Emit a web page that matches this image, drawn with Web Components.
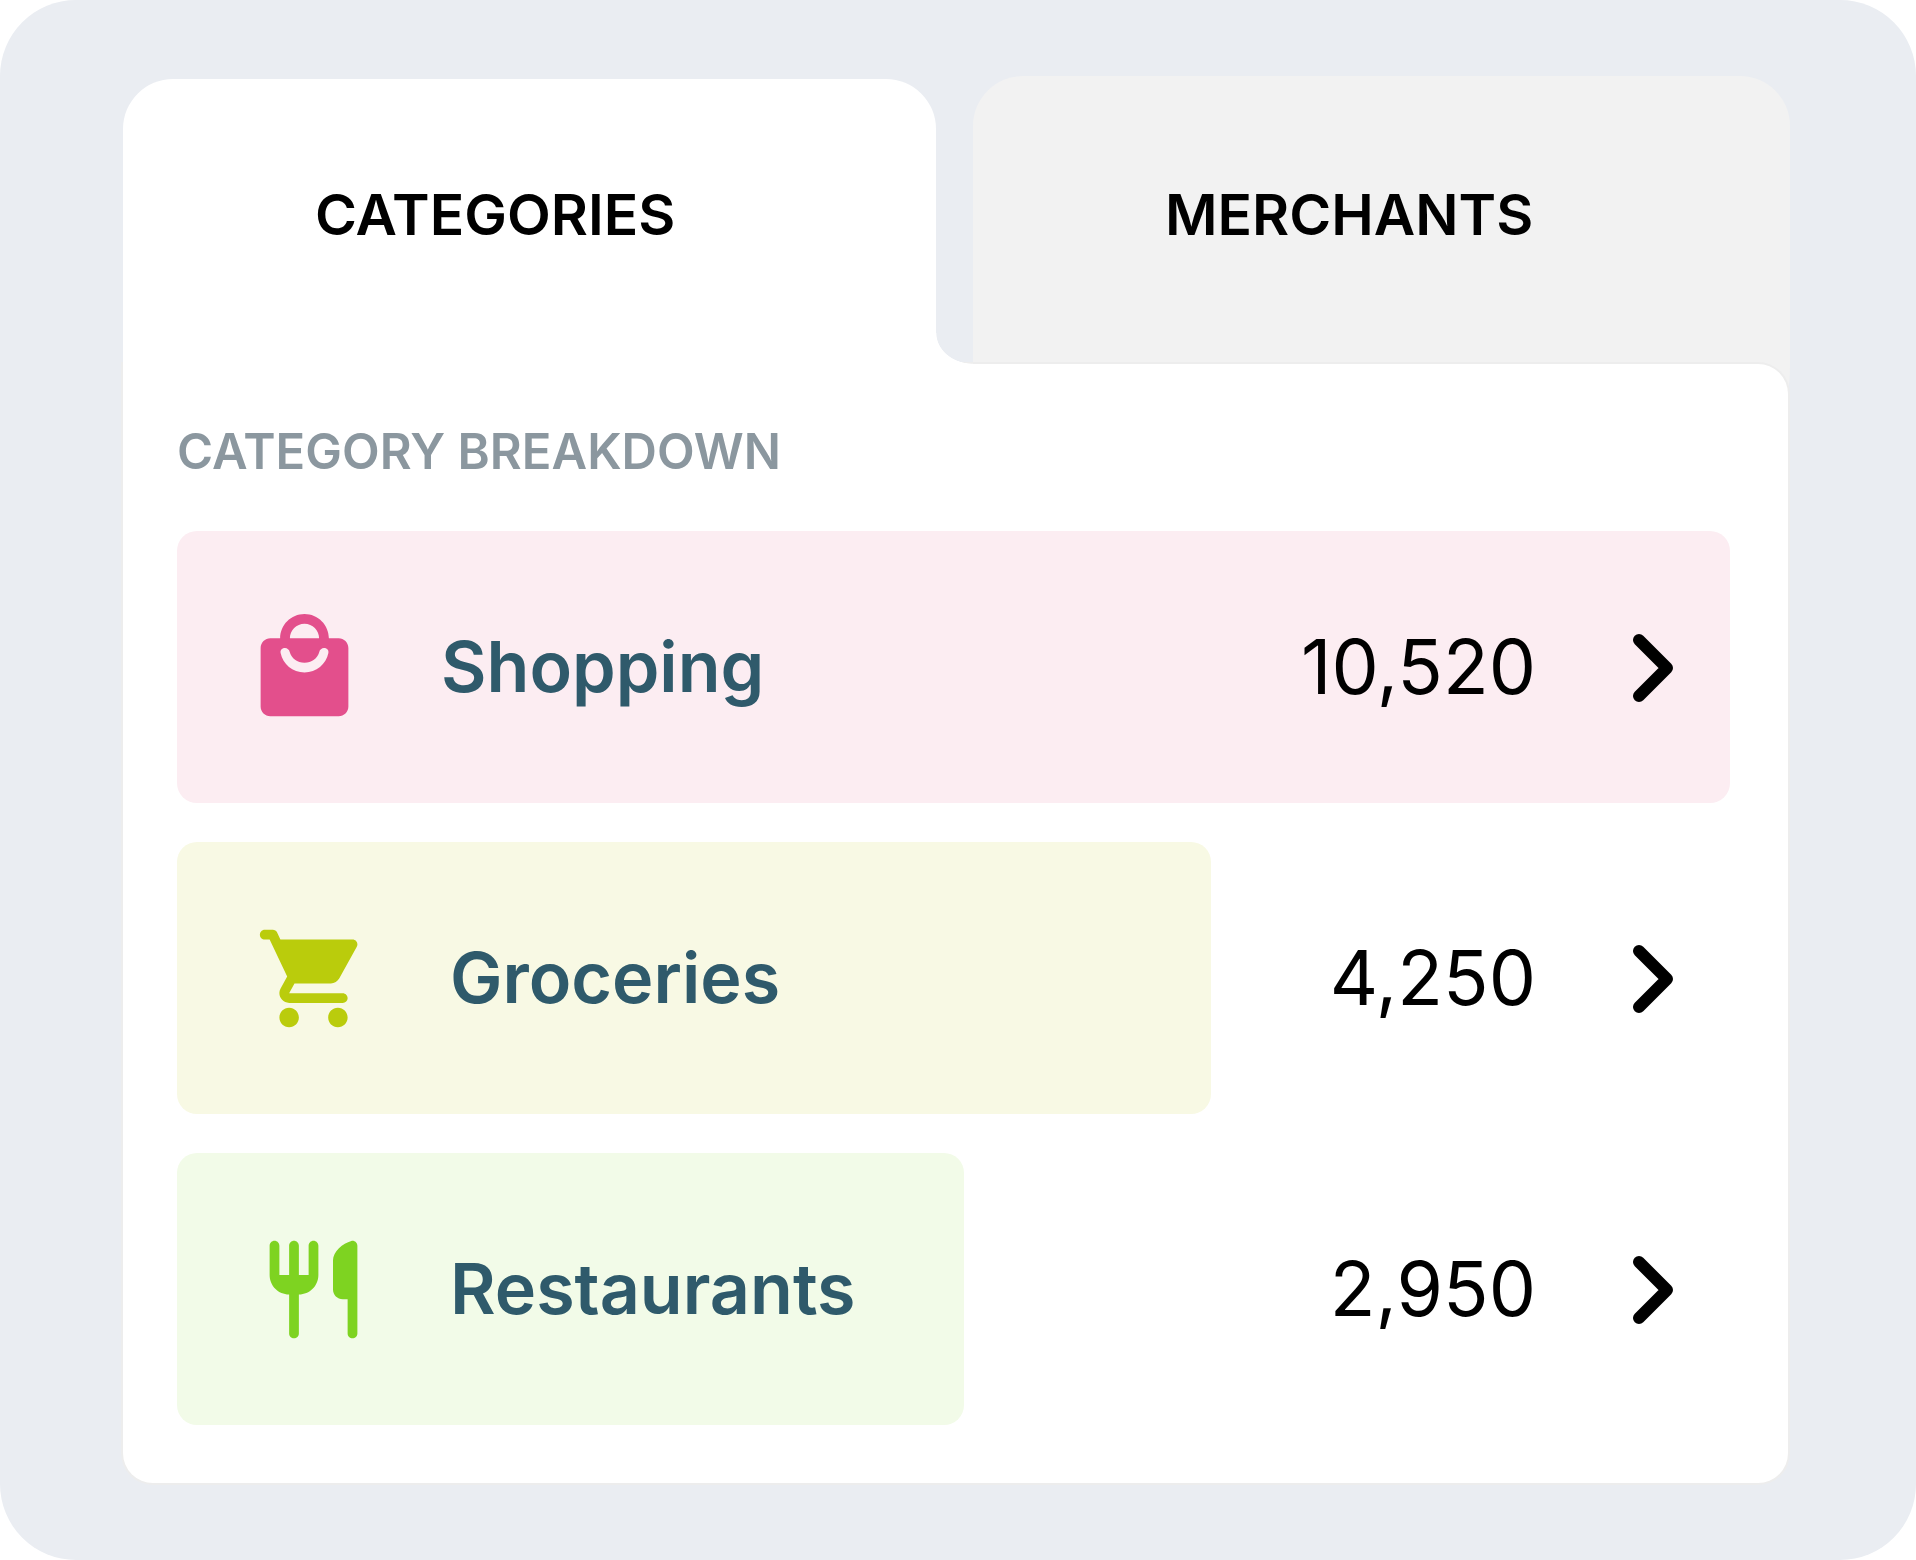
<!DOCTYPE html>
<html lang="en">
<head>
<meta charset="utf-8">
<title>Category breakdown</title>
<style>
  html { background: #fff; }
  body { margin: 0; font-family: Inter, "Liberation Sans", sans-serif; color: #000; }
</style>
</head>
<body>
<spend-card>
  <spend-tab slot="tabs" selected>CATEGORIES</spend-tab>
  <spend-tab slot="tabs">MERCHANTS</spend-tab>
  <span slot="title">CATEGORY BREAKDOWN</span>
  <spend-row icon="bag" amount="10,520" share="100" color="#e34f8c" tint="#fcedf2">Shopping</spend-row>
  <spend-row icon="cart" amount="4,250" share="66.6" color="#bacc0c" tint="#f8f9e4">Groceries</spend-row>
  <spend-row icon="fork" amount="2,950" share="50.7" color="#7ed321" tint="#f2fbe8">Restaurants</spend-row>
</spend-card>

<script>
const ICONS = {
  bag: 'M19 6h-2c0-2.76-2.24-5-5-5S7 3.24 7 6H5c-1.1 0-2 .9-2 2v12c0 1.1.9 2 2 2h14c1.1 0 2-.9 2-2V8c0-1.1-.9-2-2-2zM12 3c1.66 0 3 1.34 3 3H9c0-1.66 1.34-3 3-3zM12 13c-2.42 0-4.44-1.72-4.9-4-.12-.62.38-1 .9-1 .46 0 .86.35.97.8C9.3 10.1 10.55 11 12 11s2.7-.9 3.03-2.2c.11-.45.51-.8.97-.8.52 0 1.02.38.9 1-.46 2.28-2.48 4-4.9 4z',
  cart: 'M7 18c-1.1 0-1.99.9-1.99 2S5.9 22 7 22s2-.9 2-2-.9-2-2-2zM1 3c0 .55.45 1 1 1h1l3.6 7.59-1.35 2.44C4.52 15.37 5.48 17 7 17h11c.55 0 1-.45 1-1s-.45-1-1-1H7l1.1-2h7.45c.75 0 1.41-.41 1.75-1.03l3.58-6.49c.37-.66-.11-1.48-.87-1.48H5.21l-.67-1.43c-.16-.35-.52-.57-.9-.57H2c-.55 0-1 .45-1 1zm16 15c-1.1 0-1.99.9-1.99 2s.89 2 1.99 2 2-.9 2-2-.9-2-2-2z',
  fork: 'M11 9H9V3c0-.55-.45-1-1-1s-1 .45-1 1v6H5V3c0-.55-.45-1-1-1s-1 .45-1 1v6c0 2.21 1.79 4 4 4v8c0 .55.45 1 1 1s1-.45 1-1v-8c2.21 0 4-1.79 4-4V3c0-.55-.45-1-1-1s-1 .45-1 1v6zM16 6v6c0 1.1.9 2 2 2h1v7c0 .55.45 1 1 1s1-.45 1-1V3c0-.62-.61-1.14-1.24-.97C18 2.5 16 4.24 16 6z'
};

class SpendCard extends HTMLElement {
  constructor() {
    super();
    this.attachShadow({ mode: 'open' }).innerHTML = `
      <style>
        :host { display: block; box-sizing: border-box; min-height: 100vh; padding: 76px 128px 76px 123px;
                background: #eaedf2; border-radius: 76px; }
        .tabs { display: flex; align-items: stretch; gap: 37px; height: 288px; margin-right: -2px; }
        .panel { position: relative; background: #fff; border-radius: 0 30px 30px 30px; padding: 59px 58px 58px 54px;
                 box-shadow: 0 0 0 2px #ededed; }
        h2 { margin: 0 0 50px; font-size: 49px; line-height: 58px; font-weight: 600; color: #8b979f; }
        .rows { display: flex; flex-direction: column; gap: 39px; }
      </style>
      <div class="tabs" role="tablist"><slot name="tabs"></slot></div>
      <section class="panel">
        <h2><slot name="title"></slot></h2>
        <div class="rows"><slot></slot></div>
      </section>`;
  }
}

class SpendTab extends HTMLElement {
  constructor() {
    super();
    this.attachShadow({ mode: 'open' }).innerHTML = `
      <style>
        :host { display: flex; flex: 817 1 0; margin-bottom: -24px; }
        :host([selected]) { flex-grow: 813; margin: 3px 0 0; position: relative; z-index: 1; }
        button { flex: 1; border: 0; margin: 0; background: #f2f2f2; color: #000; font: inherit; font-size: 57px;
                 line-height: 70px; font-weight: 600; text-align: left; padding: 0 0 34px 192px;
                 border-radius: 50px 50px 2px 0 / 50px 50px 24px 0; cursor: pointer; }
        :host([selected]) button { background: #fff; border-radius: 50px 50px 0 0; padding-bottom: 14px; }
        /* concave foot that joins the selected tab to the panel */
        :host([selected])::after { content: ""; position: absolute; left: 100%; bottom: 0; width: 37px; height: 31px;
                 background: radial-gradient(37px 31px at 100% 0, transparent 98%, #fff 100%); }
      </style>
      <button type="button" role="tab"><slot></slot></button>`;
  }
  connectedCallback() {
    this.shadowRoot.querySelector('button').setAttribute('aria-selected', this.hasAttribute('selected'));
  }
}

class SpendRow extends HTMLElement {
  connectedCallback() {
    const at = n => this.getAttribute(n);
    this.attachShadow({ mode: 'open' }).innerHTML = `
      <style>
        :host { display: block; }
        .wrap { display: grid; }
        .wrap > * { grid-area: 1 / 1; }
        .bar { width: ${at('share')}%; background: ${at('tint')}; border-radius: 20px; }
        a { display: flex; align-items: center; box-sizing: border-box; height: 272px; padding: 0 55px 0 78px;
            color: #000; text-decoration: none; }
        :host([share="100"]) a { padding-left: 69px; }
        .icon { flex: none; width: 117px; height: 117px; fill: ${at('color')}; }
        .name { flex: 1; margin-left: 78px; font-size: 70px; line-height: 90px; font-weight: 600; color: #2f5a6b; }
        .amount { font-size: 75px; line-height: 90px; }
        .chev { flex: none; width: 42px; height: 70px; margin-left: 97px; fill: none; stroke: #000; stroke-width: 12;
                stroke-linecap: round; stroke-linejoin: round; overflow: visible; }
      </style>
      <div class="wrap">
        <div class="bar"></div>
        <a href="#${at('icon')}">
          <svg class="icon" viewBox="0 0 24 24" aria-hidden="true"><path fill-rule="evenodd" d="${ICONS[at('icon')]}"/></svg>
          <span class="name"><slot></slot></span>
          <span class="amount">${at('amount')}</span>
          <svg class="chev" viewBox="0 0 42 70" aria-hidden="true"><path d="M6 8L34 36L6 64"/></svg>
        </a>
      </div>`;
  }
}

customElements.define('spend-card', SpendCard);
customElements.define('spend-tab', SpendTab);
customElements.define('spend-row', SpendRow);
</script>
</body>
</html>
